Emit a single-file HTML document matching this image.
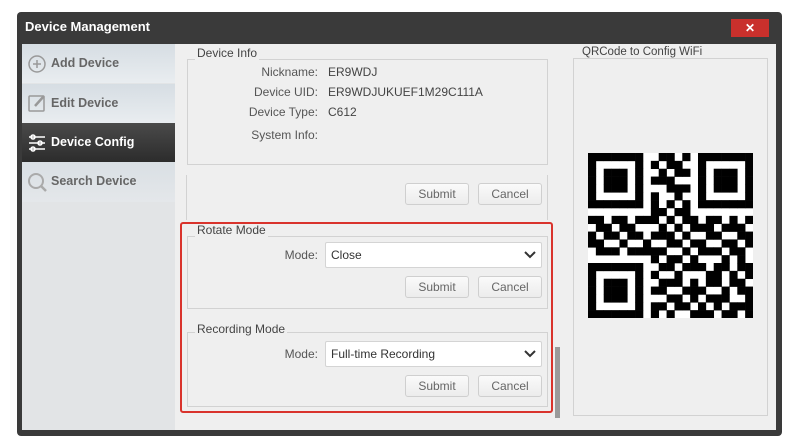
<!DOCTYPE html><html><head><style>
*{margin:0;padding:0;box-sizing:border-box}
body{width:798px;height:446px;background:#fff;font-family:"Liberation Sans",sans-serif;position:relative;overflow:hidden}
.a{position:absolute}
.win{left:17px;top:12px;width:765px;height:424px;background:#3a3a3a;border-radius:4px}
.title{left:25px;top:19px;color:#fff;font-weight:bold;font-size:13px}
.close{left:731px;top:19px;width:38px;height:18px;background:#c9302c;color:#fff;font-size:12px;text-align:center;line-height:18px;font-weight:bold}
.body{left:22px;top:44px;width:754px;height:386px;background:#efefef}
.side{left:22px;top:44px;width:153px;height:386px;background:#e2e4e6}
.item{position:absolute;left:0;width:153px;height:39px;background:linear-gradient(#d6dde3,#e9edf0);color:#666;font-weight:bold;font-size:12.5px;line-height:39px;padding-left:29px}
.item.on{background:linear-gradient(#4a4a4a,#2c2c2c);color:#fff}
.grp{position:absolute;border:1px solid #d2d2d2}
.gt{position:absolute;background:#efefef;font-size:12px;color:#444;padding:0 2px}
.lbl{position:absolute;font-size:12px;color:#555;text-align:right}
.btn{position:absolute;width:64px;height:22px;border:1px solid #cfcfcf;border-radius:3px;background:linear-gradient(#fafafa,#ececec);font-size:12px;color:#666;text-align:center;line-height:20px}
.sel{position:absolute;left:325px;width:217px;height:26px;background:#fff;border:1px solid #d4d4d4;border-radius:2px;font-size:12px;color:#333;line-height:24px;padding-left:5px}
.sel svg{position:absolute;right:5px;top:8px}
</style></head><body>
<div class="a win"></div>
<div class="a title">Device Management</div>
<div class="a close">✕</div>
<div class="a body"></div>
<div class="a side">
<div class="item" style="top:0">Add Device</div>
<div class="item" style="top:40px">Edit Device</div>
<div class="item on" style="top:79px">Device Config</div>
<div class="item" style="top:118px;height:40px;background:linear-gradient(#d9dfe4,#e4e7ea)">Search Device</div>
</div>
<svg class="a" style="left:26px;top:52px" width="24" height="150" viewBox="0 0 24 150" fill="none" stroke-width="1.5">
<circle cx="11" cy="12" r="8" stroke="#999"/><path d="M11 8v8M7 12h8" stroke="#999"/>
<rect x="3" y="44" width="15" height="15" stroke="#999" rx="1"/><path d="M9 54l9-10" stroke="#999" stroke-width="2.5"/>
<path d="M3 85h16M3 91h16M3 97h16" stroke="#fff"/><circle cx="7" cy="85" r="2" stroke="#fff"/><circle cx="14" cy="91" r="2" stroke="#fff"/><circle cx="7" cy="97" r="2" stroke="#fff"/>
<circle cx="10" cy="129" r="7" stroke="#aaa" stroke-width="2"/><path d="M15 134l5 5" stroke="#aaa" stroke-width="2.5"/>
</svg>
<div class="grp" style="left:187px;top:59px;width:361px;height:106px"></div>
<div class="gt" style="left:195px;top:46px">Device Info</div>
<div class="lbl" style="left:220px;top:65px;width:98px">Nickname:</div>
<div class="lbl" style="left:220px;top:85px;width:98px">Device UID:</div>
<div class="lbl" style="left:220px;top:105px;width:98px">Device Type:</div>
<div class="lbl" style="left:220px;top:128px;width:98px">System Info:</div>
<div class="lbl" style="left:328px;top:65px;text-align:left;color:#444">ER9WDJ</div>
<div class="lbl" style="left:328px;top:85px;text-align:left;color:#444">ER9WDJUKUEF1M29C111A</div>
<div class="lbl" style="left:328px;top:105px;text-align:left;color:#444">C612</div>
<div class="a" style="left:186px;top:175px;width:1px;height:45px;background:#d2d2d2"></div>
<div class="a" style="left:547px;top:175px;width:1px;height:45px;background:#d2d2d2"></div>
<div class="btn" style="left:405px;top:183px">Submit</div>
<div class="btn" style="left:478px;top:183px">Cancel</div>
<div class="grp" style="left:187px;top:236px;width:361px;height:73px"></div>
<div class="gt" style="left:195px;top:223px">Rotate Mode</div>
<div class="lbl" style="left:260px;top:248px;width:58px">Mode:</div>
<div class="sel" style="top:242px">Close<svg width="12" height="8"><path d="M1 1l5 5 5-5" stroke="#333" stroke-width="2" fill="none"/></svg></div>
<div class="btn" style="left:405px;top:276px">Submit</div>
<div class="btn" style="left:478px;top:276px">Cancel</div>
<div class="grp" style="left:187px;top:332px;width:361px;height:75px"></div>
<div class="gt" style="left:195px;top:322px">Recording Mode</div>
<div class="lbl" style="left:260px;top:347px;width:58px">Mode:</div>
<div class="sel" style="top:341px">Full-time Recording<svg width="12" height="8"><path d="M1 1l5 5 5-5" stroke="#333" stroke-width="2" fill="none"/></svg></div>
<div class="btn" style="left:405px;top:375px">Submit</div>
<div class="btn" style="left:478px;top:375px">Cancel</div>
<div class="a" style="left:555px;top:347px;width:5px;height:71px;background:#9a9a9a"></div>
<div class="a" style="left:180px;top:222px;width:373px;height:191px;border:2.5px solid #d9332c;border-radius:3px"></div>
<div class="grp" style="left:573px;top:58px;width:195px;height:358px"></div>
<div class="gt" style="left:580px;top:46px;font-size:11.5px">QRCode to Config WiFi</div>
<svg class="a" style="left:588px;top:153px" width="165" height="165" id="qr"></svg>
<script>
var rows=["111111100110101111111","100000101011001000001","101110100101101011101","101110101110001011101","101110100011101011101","100000101001001000001","111111101010101111111","000000001101100000000","110110111010110110101","011011000101011101110","101101101110100110011","110010010011011001101","011101111100101110110","000000001011010001010","111111100110111011011","100000101001000110101","101110100111010110110","101110101100111001011","101110100011010111001","100000101101101010111","111111101010011101101"];
var s="",m=165/21;for(var y=0;y<21;y++)for(var x=0;x<21;x++)if(rows[y][x]=="1")s+='<rect x="'+(x*m).toFixed(2)+'" y="'+(y*m).toFixed(2)+'" width="'+(m+0.3).toFixed(2)+'" height="'+(m+0.3).toFixed(2)+'"/>';
document.getElementById("qr").innerHTML='<rect width="165" height="165" fill="#fff"/>'+s;
</script>
</body></html>
